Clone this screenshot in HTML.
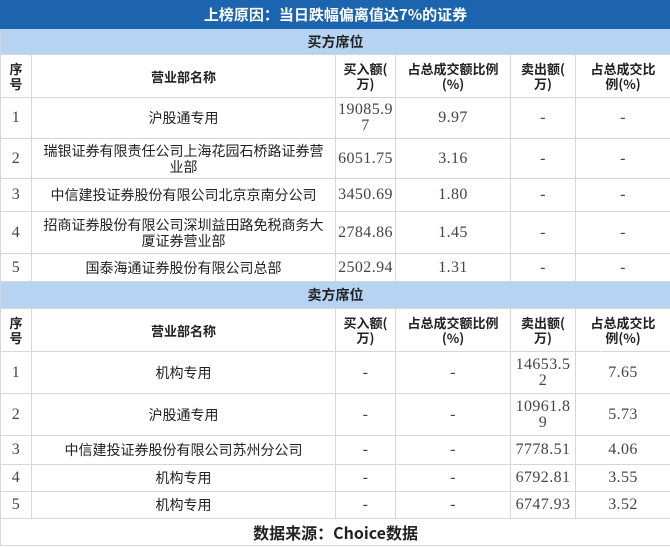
<html><head><style>
body{margin:0;width:670px;height:547px;overflow:hidden;background:#fff;font-family:"Liberation Serif","Noto Sans CJK SC",serif;font-size:13px;color:#222}
table{border-collapse:collapse;table-layout:fixed;width:670px;position:absolute;left:0;top:0}
td{border:1px solid #d6d6d6;text-align:center;padding:0 2px;line-height:16px;overflow:hidden;white-space:nowrap}
.t{background:#1c64ae;color:#fff;font-weight:bold;font-size:15px;height:28px;border-color:#1c64ae;font-family:"Noto Sans CJK SC",sans-serif;line-height:20px}
.s{background:#b6d4f2;font-weight:bold;font-size:14px;height:26px;font-family:"Noto Sans CJK SC",sans-serif;line-height:20px}
.h td{font-weight:bold;font-family:"Noto Sans CJK SC",sans-serif;font-size:13px;line-height:15px}
.n{font-family:"Liberation Serif",serif;color:#444;letter-spacing:0.4px}
.c{font-family:"Noto Sans CJK SC",sans-serif;font-size:14px;padding:0 4px;line-height:16px}
</style></head><body>
<table>
<col style="width:31px"><col style="width:304px"><col style="width:60px"><col style="width:115px"><col style="width:65px"><col style="width:95px">
<tr><td colspan="6" class="t">上榜原因：当日跌幅偏离值达7%的证券</td></tr>
<tr><td colspan="6" class="s">买方席位</td></tr>
<tr class="h" style="height:43px"><td>序<br>号</td><td>营业部名称</td><td>买入额(<br>万)</td><td>占总成交额比例<br>(%)</td><td>卖出额(<br>万)</td><td>占总成交比<br>例(%)</td></tr>
<tr style="height:41px"><td class="n">1</td><td class="c">沪股通专用</td><td class="n">19085.9<br>7</td><td class="n">9.97</td><td class="n">-</td><td class="n">-</td></tr>
<tr style="height:40px"><td class="n">2</td><td class="c">瑞银证券有限责任公司上海花园石桥路证券营<br>业部</td><td class="n">6051.75</td><td class="n">3.16</td><td class="n">-</td><td class="n">-</td></tr>
<tr style="height:33px"><td class="n">3</td><td class="c">中信建投证券股份有限公司北京京南分公司</td><td class="n">3450.69</td><td class="n">1.80</td><td class="n">-</td><td class="n">-</td></tr>
<tr style="height:42px"><td class="n">4</td><td class="c">招商证券股份有限公司深圳益田路免税商务大<br>厦证券营业部</td><td class="n">2784.86</td><td class="n">1.45</td><td class="n">-</td><td class="n">-</td></tr>
<tr style="height:28px"><td class="n">5</td><td class="c">国泰海通证券股份有限公司总部</td><td class="n">2502.94</td><td class="n">1.31</td><td class="n">-</td><td class="n">-</td></tr>
<tr style="height:27px"><td colspan="6" class="s">卖方席位</td></tr>
<tr class="h" style="height:43px"><td>序<br>号</td><td>营业部名称</td><td>买入额(<br>万)</td><td>占总成交额比例<br>(%)</td><td>卖出额(<br>万)</td><td>占总成交比<br>例(%)</td></tr>
<tr style="height:42px"><td class="n">1</td><td class="c">机构专用</td><td class="n">-</td><td class="n">-</td><td class="n">14653.5<br>2</td><td class="n">7.65</td></tr>
<tr style="height:42px"><td class="n">2</td><td class="c">沪股通专用</td><td class="n">-</td><td class="n">-</td><td class="n">10961.8<br>9</td><td class="n">5.73</td></tr>
<tr style="height:29px"><td class="n">3</td><td class="c">中信建投证券股份有限公司苏州分公司</td><td class="n">-</td><td class="n">-</td><td class="n">7778.51</td><td class="n">4.06</td></tr>
<tr style="height:27px"><td class="n">4</td><td class="c">机构专用</td><td class="n">-</td><td class="n">-</td><td class="n">6792.81</td><td class="n">3.55</td></tr>
<tr style="height:27px"><td class="n">5</td><td class="c">机构专用</td><td class="n">-</td><td class="n">-</td><td class="n">6747.93</td><td class="n">3.52</td></tr>
<tr style="height:27px"><td colspan="6" style="font-weight:bold;font-family:'Noto Sans CJK SC',sans-serif">数据来源：Choice数据</td></tr>
</table>
</body></html>
